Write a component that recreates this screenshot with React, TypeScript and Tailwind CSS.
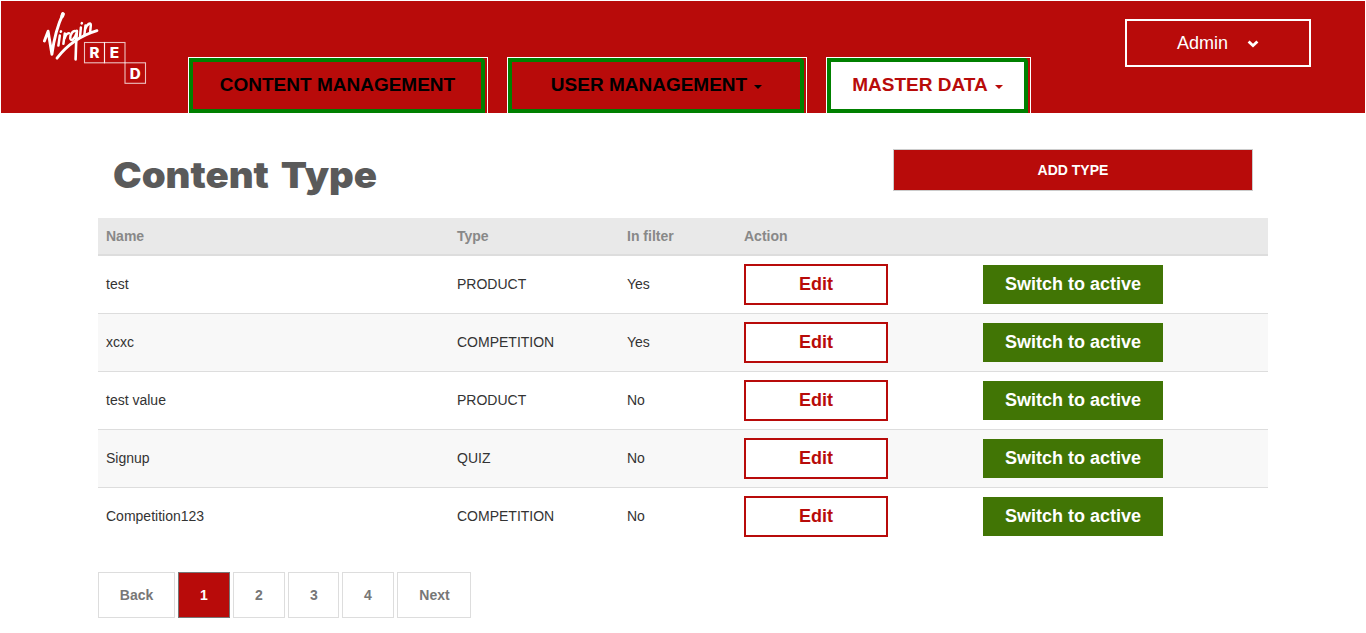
type Row = { name: string; type: string; inFilter: string };

const rows: Row[] = [
  { name: 'test', type: 'PRODUCT', inFilter: 'Yes' },
  { name: 'xcxc', type: 'COMPETITION', inFilter: 'Yes' },
  { name: 'test value', type: 'PRODUCT', inFilter: 'No' },
  { name: 'Signup', type: 'QUIZ', inFilter: 'No' },
  { name: 'Competition123', type: 'COMPETITION', inFilter: 'No' },
];

const columns = 'grid grid-cols-[351px_170px_117px_239px_293px] items-center';

function Logo() {
  return (
    <svg className="block h-[76px] w-[108px]" viewBox="40 10 108 76" fill="none" stroke="#fff" strokeLinecap="round" strokeLinejoin="round">
      <path d="M44.4 41 L48.1 31.2 L51.9 54.2 C53.6 42 58 24.4 62.9 14.2" strokeWidth="2.9" />
      <path d="M62.2 16.2 L63 14" strokeWidth="3.8" />
      <path d="M59.8 35.6 L58.4 45.6" strokeWidth="2.5" />
      <path d="M60.8 31.8 L61 31.4" strokeWidth="2.5" />
      <path d="M64.8 33.4 L63.4 43.8 M64.6 38.4 C65.6 35 67 33 69 33.2" strokeWidth="2.5" />
      <path d="M76.6 31.4 C73 29.6 69.9 34.6 70.3 38.4 C70.8 41.6 74.6 39.6 76.4 33.6 M76.9 30.8 C76.2 40 75.8 50 75.6 59.4" strokeWidth="2.6" />
      <path d="M80.9 27.4 L80 37" strokeWidth="2.5" />
      <path d="M81.7 23.5 L81.9 23.1" strokeWidth="2.5" />
      <path d="M85.5 25.4 L84.4 34.8 M85.2 29 C86.8 24.4 91.2 21.2 90.8 25.4 L90.2 31.4" strokeWidth="2.5" />
      <path d="M97 30.7 C82 35.2 67.6 44.4 57 58.2" strokeWidth="2.8" />
      <g strokeWidth="1.1" strokeOpacity=".75" strokeLinejoin="miter">
        <rect x="84.5" y="42.5" width="20" height="20.3" />
        <rect x="104.5" y="42.5" width="20.5" height="20.3" />
        <rect x="125" y="62.8" width="20.5" height="20.5" />
      </g>
      <g className="font-['Inter',sans-serif] font-extrabold" fill="#fff" stroke="none" fontSize="14">
        <text x="89.6" y="58.2" textLength="10" lengthAdjust="spacingAndGlyphs">R</text>
        <text x="109.8" y="58.2" textLength="9.4" lengthAdjust="spacingAndGlyphs">E</text>
        <text x="129.7" y="78.5" textLength="11" lengthAdjust="spacingAndGlyphs">D</text>
      </g>
    </svg>
  );
}

function Tab({ label, caret, active, className }: { label: string; caret?: boolean; active?: boolean; className: string }) {
  return (
    <a className={`flex h-14 border border-b-0 border-white pr-[2px] ${className}`}>
      <span
        className={`flex flex-1 items-center justify-center rounded-tr-[4px] border-4 border-[#008000] pb-[3px] text-[19px] leading-none font-bold whitespace-nowrap ${
          active ? 'bg-white text-[#b80b0a]' : 'pl-px text-black'
        }`}
      >
        {label}
        {caret && (
          <span className="mt-1.5 ml-[7px] border-x-4 border-t-4 border-x-transparent border-t-current" />
        )}
      </span>
    </a>
  );
}

function PageLink({ label, className }: { label: string; className: string }) {
  return (
    <a className={`flex h-[46px] items-center justify-center border text-sm font-bold ${className}`}>{label}</a>
  );
}

export default function App() {
  return (
    <div className="h-[633px] w-[1366px] overflow-hidden bg-white px-px pt-px font-['Liberation_Sans',Arial,sans-serif] text-sm text-[#333]">
      <header className="flex h-28 items-start bg-[#b80b0a]">
        <div className="ml-[39px] pt-[9px]">
          <Logo />
        </div>
        <nav className="ml-10 flex gap-[19px] self-end">
          <Tab label="CONTENT MANAGEMENT" className="w-[300px]" />
          <Tab label="USER MANAGEMENT" caret className="w-[300px]" />
          <Tab label="MASTER DATA" caret active className="w-[205px]" />
        </nav>
        <button className="mt-[18px] ml-auto mr-[54px] flex h-12 w-[186px] items-center border-2 border-white pl-[50px] text-lg leading-none text-white">
          Admin
          <svg className="mt-[2px] ml-[19px] h-[8px] w-[12px]" viewBox="0 0 12 8" fill="#fff">
            <path d="M0.6 2.4 L2.6 0.5 L6 3.7 L9.4 0.5 L11.4 2.4 L6 7.6 Z" />
          </svg>
        </button>
      </header>

      <main className="ml-[97px] w-[1170px]">
        <div className="flex h-[105px] items-start justify-between px-[15px]">
          <h1 className="mt-[40px] origin-left scale-x-[1.065] font-['Inter',sans-serif] text-[36px] leading-[44px] font-black [word-spacing:4px] text-[#5a5a5a]">Content Type</h1>
          <button className="mt-9 h-[42px] w-[360px] border border-[#ccc] bg-[#b80b0a] text-sm font-bold text-white">ADD TYPE</button>
        </div>

        <div className={`${columns} h-[38px] border-b-2 border-[#ddd] bg-[#e9e9e9] font-bold text-[#888]`}>
          <span className="pl-2">Name</span>
          <span className="pl-2">Type</span>
          <span className="pl-2">In filter</span>
          <span className="pl-2">Action</span>
        </div>
        <div>
          {rows.map((row) => (
            <div key={row.name} className={`${columns} h-[58px] border-b border-[#ddd] last:border-transparent even:bg-[#f8f8f8]`}>
              <span className="pb-[2px] pl-2">{row.name}</span>
              <span className="pb-[2px] pl-2">{row.type}</span>
              <span className="pb-[2px] pl-2">{row.inFilter}</span>
              <span className="pl-2">
                <button className="block h-[41px] w-36 border-2 border-[#b80b0a] bg-white pb-px text-lg leading-none font-bold text-[#b80b0a]">Edit</button>
              </span>
              <span className="pl-2">
                <button className="block h-[39px] w-[180px] bg-[#417505] pb-px text-lg leading-none font-bold text-white">Switch to active</button>
              </span>
            </div>
          ))}
        </div>

        <div className="mt-[26px] flex gap-[3px]">
          <PageLink label="Back" className="w-[77px] border-[#ddd] text-[#777]" />
          <PageLink label="1" className="w-[52px] border-[#777] bg-[#b80b0a] text-white" />
          <PageLink label="2" className="w-[52px] border-[#ddd] text-[#777]" />
          <PageLink label="3" className="w-[51px] border-[#ddd] pl-px text-[#777]" />
          <PageLink label="4" className="w-[52px] border-[#ddd] text-[#777]" />
          <PageLink label="Next" className="w-[74px] border-[#ddd] pl-px text-[#777]" />
        </div>
      </main>
    </div>
  );
}
